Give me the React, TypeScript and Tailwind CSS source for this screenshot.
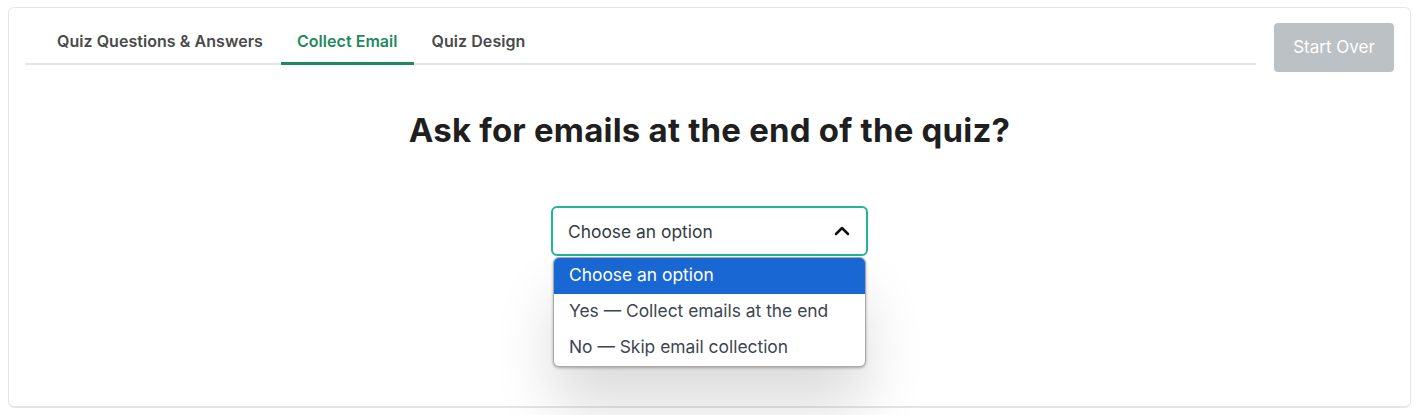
import { ChevronUp } from "lucide-react";

const tabs = [
  { label: "Quiz Questions & Answers", active: false },
  { label: "Collect Email", active: true },
  { label: "Quiz Design", active: false },
];

const options = [
  "Choose an option",
  "Yes — Collect emails at the end",
  "No — Skip email collection",
];

export default function App() {
  return (
    <div className="w-[1419px] h-[415px] bg-white overflow-hidden pt-[7px] px-[8px]" style={{ fontFamily: "Inter, 'Noto Sans', sans-serif" }}>
      <div className="h-[401px] rounded-md border border-[#e3e6e6] border-b-2 bg-white">
        {/* ── Header ── */}
        <div className="flex items-start px-4 pt-[15px]">
          <div className="flex-1 flex pl-4 gap-0.5 border-b-2 border-[#e3e6e6] mt-[6px]">
            {tabs.map((t) => (
              <div
                key={t.label}
                className={`px-4 h-[36px] text-[16px] font-semibold tracking-[0.05px] -mb-[2px] border-b-[3px] ${
                  t.active ? "text-[#1f8a5e] border-[#1f8a5e]" : "text-[#4a4a4a] border-transparent"
                }`}
              >
                {t.label}
              </div>
            ))}
          </div>
          <button className="ml-[18px] w-[120px] h-[49px] rounded bg-[#bcc1c5] text-white text-[17px]">
            Start Over
          </button>
        </div>

        {/* ── Question ── */}
        <h2 className="mt-[34px] text-center text-[33px] font-bold text-[#1f1f1f] tracking-[0.2px]">
          Ask for emails at the end of the quiz?
        </h2>

        {/* ── Select ── */}
        <div className="mt-[50px] flex justify-center">
          <div className="w-[317px] relative">
            <div className="h-[50px] rounded-md border-2 border-[#1fb597] flex items-center justify-between pl-[15px] pr-[12px] pt-[3px] text-[17.4px] text-[#333b44]">
              <span>Choose an option</span>
              <ChevronUp size={24} strokeWidth={2.5} className="text-[#111] -mt-[3px]" />
            </div>
            <div className="mt-[1px] mx-[2px] rounded-md border border-[#a9a9a9] bg-white overflow-hidden shadow-[0_1px_3px_rgba(0,0,0,0.3),0_40px_60px_rgba(0,0,0,0.14)]">
              {options.map((o, i) => (
                <div
                  key={o}
                  className={`h-[36px] flex items-center px-[15px] text-[17.4px] ${
                    i === 0 ? "bg-[#1967d2] text-white" : "text-[#3d4652]"
                  }`}
                >
                  {o}
                </div>
              ))}
            </div>
          </div>
        </div>
      </div>
    </div>
  );
}
